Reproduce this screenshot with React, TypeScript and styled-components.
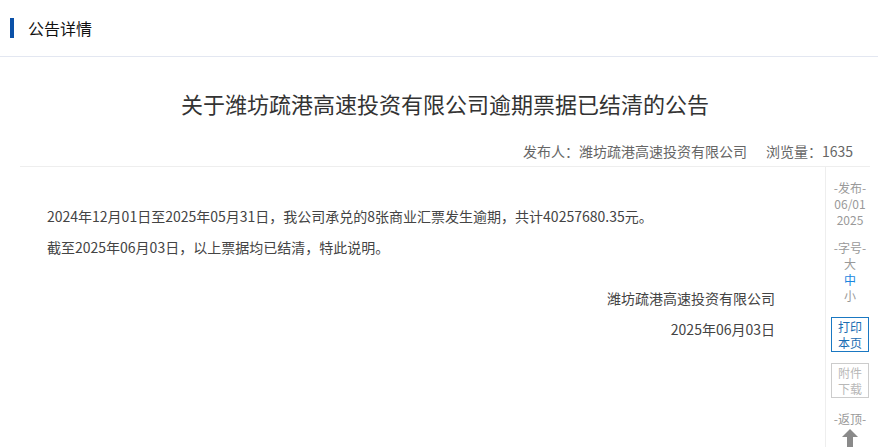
import React from "react";
import styled, { createGlobalStyle } from "styled-components";

const Global = createGlobalStyle`
  html, body { margin: 0; padding: 0; background: #fff; }
  body {
    font-family: "Microsoft YaHei", "Noto Sans CJK SC", "Noto Sans", sans-serif;
    color: #333;
  }
`;

const Header = styled.div`
  height: 56px;
  border-bottom: 1px solid #e3e7f1;
  display: flex;
  align-items: center;
  padding-left: 10px;
`;

const HeaderBar = styled.span`
  width: 4px;
  height: 20px;
  background: #0b51a8;
  margin-right: 14px;
`;

const HeaderTitle = styled.span`
  font-size: 16px;
  color: #111;
  line-height: 20px;
`;

const Container = styled.div`
  margin: 0 8px 0 20px;
`;

const TitleBlock = styled.div`
  padding-top: 30px;
  padding-bottom: 5px;
  border-bottom: 1px solid #eeeeee;
`;

const Title = styled.h1`
  margin: 0;
  font-size: 22px;
  font-weight: normal;
  line-height: 32px;
  text-align: center;
  color: #333;
`;

const Meta = styled.div`
  margin-top: 22px;
  padding-right: 17px;
  display: flex;
  justify-content: flex-end;
  gap: 19px;
  font-size: 14px;
  line-height: 20px;
  color: #666;
`;

const Body = styled.div`
  display: flex;
`;

const Main = styled.div`
  flex: 1;
  padding: 34px 50px 0 27px;
`;

const Para = styled.p`
  margin: 0;
  font-size: 14px;
  line-height: 31px;
  color: #444;
`;

const Sign = styled.div`
  margin-top: 20px;
  text-align: right;
  font-size: 14px;
  line-height: 31px;
  color: #444;
`;

const Side = styled.div`
  width: 45px;
  box-sizing: border-box;
  border-left: 1px solid #eeeeee;
  padding: 13px 0 0 4px;
  display: flex;
  flex-direction: column;
  align-items: center;
  font-size: 12px;
  color: #999;
  min-height: 280px;
`;

const SideGroup = styled.div<{ $gap?: number }>`
  display: flex;
  flex-direction: column;
  align-items: center;
  line-height: 16px;
  margin-bottom: ${(p) => p.$gap ?? 0}px;
`;

const SizeItem = styled.span<{ $active?: boolean }>`
  color: ${(p) => (p.$active ? "#1a86e0" : "#999")};
  line-height: 16px;
  cursor: pointer;
`;

const BoxButton = styled.div<{ $primary?: boolean }>`
  width: 36px;
  padding: 1px 0;
  border: 1px solid ${(p) => (p.$primary ? "#1a78c2" : "#cccccc")};
  color: ${(p) => (p.$primary ? "#1a6db3" : "#b8b8b8")};
  text-align: center;
  line-height: 15.5px;
  font-size: 12px;
  margin-bottom: ${(p) => (p.$primary ? 11 : 13)}px;
  cursor: pointer;
`;

const ArrowIcon = () => (
  <svg width="16" height="20" viewBox="0 0 16 20" style={{ display: "block", marginTop: 2 }}>
    <path d="M8 0 L16 8 L11 8 L11 20 L5 20 L5 8 L0 8 Z" fill="#8a8a8a" />
  </svg>
);

export default function App() {
  return (
    <>
      <Global />
      <Header>
        <HeaderBar />
        <HeaderTitle>公告详情</HeaderTitle>
      </Header>
      <Container>
        <TitleBlock>
          <Title>关于潍坊疏港高速投资有限公司逾期票据已结清的公告</Title>
          <Meta>
            <span>发布人：潍坊疏港高速投资有限公司</span>
            <span>浏览量：1635</span>
          </Meta>
        </TitleBlock>
        <Body>
          <Main>
            <Para>2024年12月01日至2025年05月31日，我公司承兑的8张商业汇票发生逾期，共计40257680.35元。</Para>
            <Para>截至2025年06月03日，以上票据均已结清，特此说明。</Para>
            <Sign>
              <div>潍坊疏港高速投资有限公司</div>
              <div>2025年06月03日</div>
            </Sign>
          </Main>
          <Side>
            <SideGroup $gap={12}>
              <span>-发布-</span>
              <span>06/01</span>
              <span>2025</span>
            </SideGroup>
            <SideGroup $gap={13}>
              <span>-字号-</span>
              <SizeItem>大</SizeItem>
              <SizeItem $active>中</SizeItem>
              <SizeItem>小</SizeItem>
            </SideGroup>
            <BoxButton $primary>打印<br />本页</BoxButton>
            <BoxButton>附件<br />下载</BoxButton>
            <SideGroup>
              <span>-返顶-</span>
              <ArrowIcon />
            </SideGroup>
          </Side>
        </Body>
      </Container>
    </>
  );
}
